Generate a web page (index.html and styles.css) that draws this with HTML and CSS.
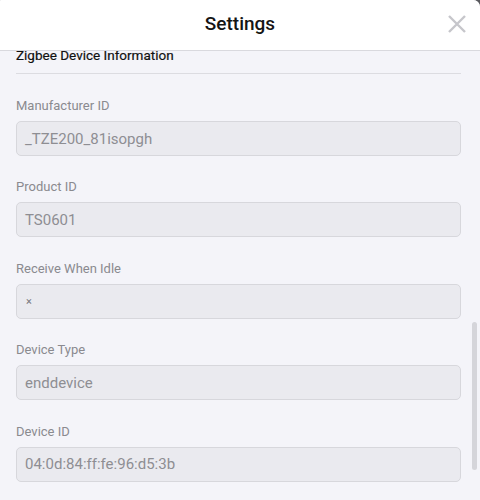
FILE: index.html
```
<!DOCTYPE html>
<html>
<head>
<meta charset="utf-8">
<link rel="stylesheet" href="styles.css">
</head>
<body>
<div class="modal">
  <header class="header">
    <h1 class="title">Settings</h1>
    <button class="close" aria-label="Close">
      <svg width="20" height="20" viewBox="0 0 20 20"><path d="M2 2 L18 18 M18 2 L2 18" stroke="#c6c6cb" stroke-width="2.4" stroke-linecap="butt" fill="none"/></svg>
    </button>
  </header>
  <div class="content">
    <div class="inner">
      <h2 class="section">Zigbee Device Information</h2>
      <div class="field">
        <div class="label">Manufacturer ID</div>
        <div class="input">_TZE200_81isopgh</div>
      </div>
      <div class="field">
        <div class="label">Product ID</div>
        <div class="input">TS0601</div>
      </div>
      <div class="field">
        <div class="label">Receive When Idle</div>
        <div class="input small">×</div>
      </div>
      <div class="field">
        <div class="label">Device Type</div>
        <div class="input">enddevice</div>
      </div>
      <div class="field">
        <div class="label">Device ID</div>
        <div class="input">04:0d:84:ff:fe:96:d5:3b</div>
      </div>
    </div>
    <div class="scrollbar"></div>
  </div>
</div>
</body>
</html>
```
FILE: styles.css
```
* { box-sizing: border-box; }
html, body { margin: 0; padding: 0; }
body {
  width: 480px;
  height: 500px;
  background: #5a5a5e;
  font-family: Roboto, "Liberation Sans", sans-serif;
  overflow: hidden;
}
.modal {
  width: 480px;
  height: 500px;
  background: #f4f4f9;
  border-top-right-radius: 7px;
  border-top-left-radius: 1px;
  overflow: hidden;
  display: flex;
  flex-direction: column;
}
.header {
  height: 51px;
  flex: none;
  background: #ffffff;
  border-bottom: 1px solid #d9d9de;
  display: flex;
  align-items: center;
  justify-content: center;
  position: relative;
}
.title {
  margin: 0;
  font-size: 19px;
  font-weight: 500;
  color: #151515;
  line-height: 24px;
  margin-top: -2px;
}
.close {
  position: absolute;
  right: 13px;
  top: 14px;
  width: 20px;
  height: 20px;
  padding: 0;
  border: 0;
  background: none;
  display: flex;
}
.content {
  flex: 1;
  position: relative;
  overflow: hidden;
}
.inner {
  margin-top: -4px;
  padding: 0 19px 0 16px;
}
.section {
  margin: 0;
  font-size: 13.5px;
  font-weight: 400;
  color: #111;
  line-height: 16px;
  padding-bottom: 10px;
  border-bottom: 1px solid #dcdce1;
  -webkit-text-stroke: 0.2px #111;
}
.field {
  display: flex;
  flex-direction: column;
  gap: 7px;
  margin-top: 23.4px;
}
.section + .field { margin-top: 24px; }
.label {
  font-size: 13px;
  line-height: 16px;
  color: #8a8a8f;
}
.input {
  height: 35px;
  background: #eaeaef;
  border: 1px solid #d7d7dc;
  border-radius: 5px;
  padding: 0 8px;
  display: flex;
  align-items: center;
  font-size: 15px;
  color: #8e8e93;
}
.input.small {
  font-size: 11px;
  color: #77777c;
  padding-left: 9px;
}
.scrollbar {
  position: absolute;
  right: 3px;
  top: 271px;
  width: 5px;
  height: 148px;
  border-radius: 3px;
  background: #d5d5da;
}
```
